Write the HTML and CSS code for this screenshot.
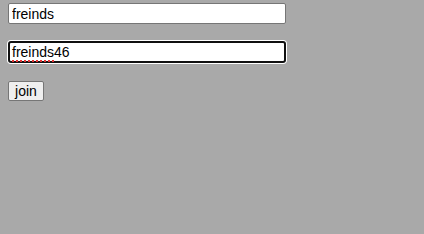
FILE: index.html
```html
<!DOCTYPE html>
<html>
<head>
<meta charset="utf-8">
<link rel="stylesheet" href="styles.css">
</head>
<body>
<form class="join-form">
  <input class="field" type="text" value="freinds">
  <div class="field field-focus"><span class="misspelled">freinds</span>46</div>
  <button class="join-btn" type="button">join</button>
</form>
</body>
</html>
```
FILE: styles.css
```css
html, body {
  margin: 0;
  padding: 0;
  background: #a9a9a9;
  width: 424px;
  height: 234px;
  overflow: hidden;
}
.join-form {
  display: flex;
  flex-direction: column;
  align-items: flex-start;
  padding: 3px 8px;
  gap: 17px;
}
.field {
  box-sizing: border-box;
  width: 278px;
  height: 21px;
  margin: 0;
  padding: 0 3px;
  border: 1px solid #767676;
  border-radius: 2px;
  background: #fff;
  font-family: "Liberation Sans", Arial, sans-serif;
  font-size: 14px;
  line-height: 19px;
  color: #000;
  outline: none;
}
.field-focus {
  height: 22px;
  border: 2px solid #101010;
  border-radius: 3px;
  padding: 0 2px;
  line-height: 18px;
  box-shadow: 0 0 0 1px #fff;
}
.misspelled {
  text-decoration: underline dotted #e03030;
  text-decoration-thickness: 1.5px;
  text-underline-offset: 3px;
  text-decoration-skip-ink: none;
}
.join-btn {
  box-sizing: border-box;
  width: 36px;
  height: 20px;
  margin: 1px 0 0;
  padding: 0;
  border: 1px solid #767676;
  border-radius: 2px;
  background: #efefef;
  font-family: "Liberation Sans", Arial, sans-serif;
  font-size: 14px;
  color: #000;
  line-height: 18px;
  text-align: center;
}
```
